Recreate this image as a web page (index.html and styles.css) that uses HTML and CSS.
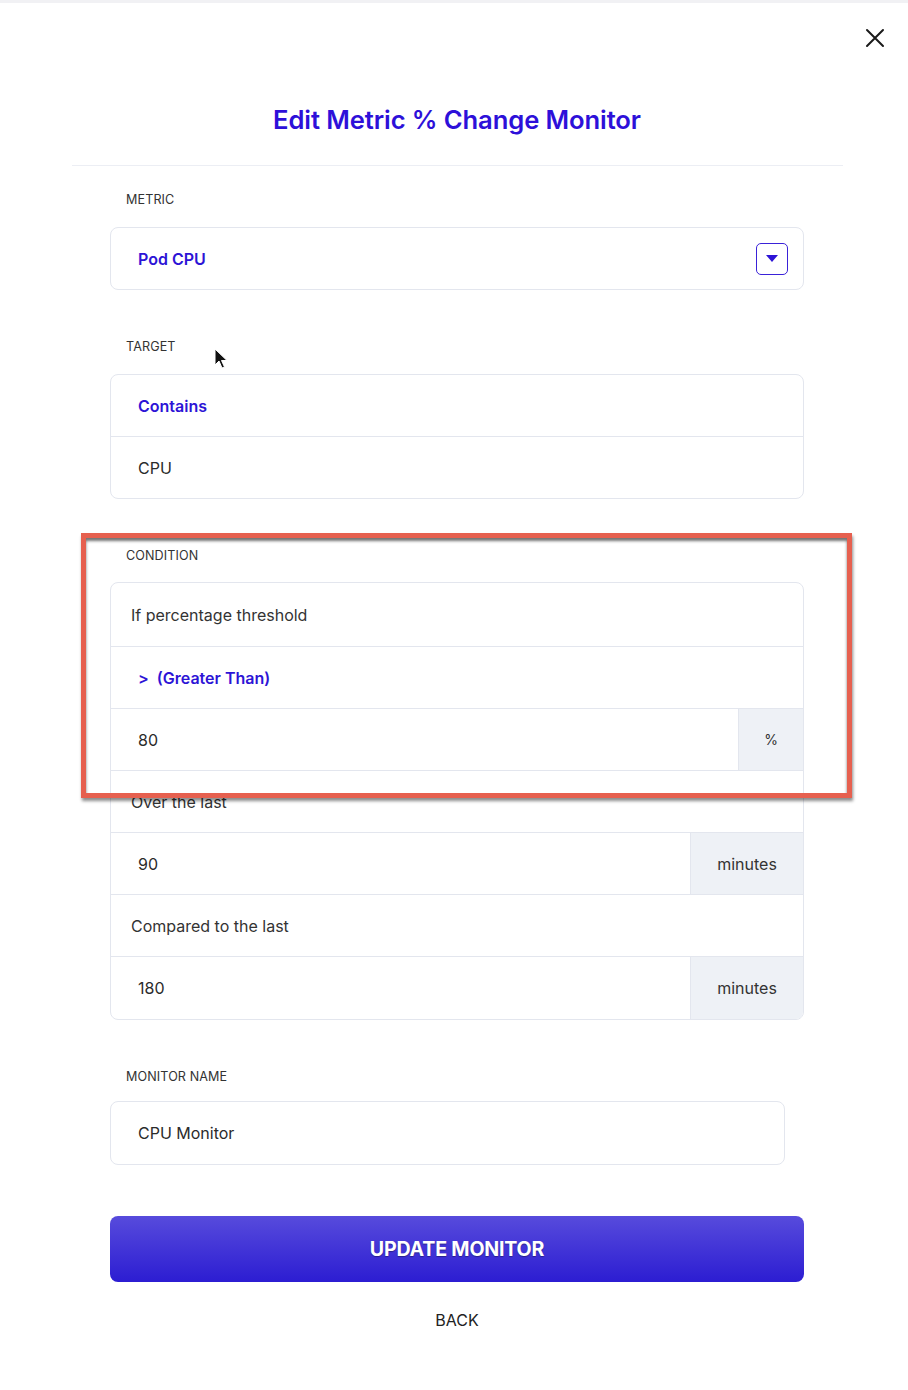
FILE: index.html
```html
<!DOCTYPE html>
<html lang="en">
<head>
<meta charset="utf-8">
<title>Edit Metric % Change Monitor</title>
<link rel="stylesheet" href="styles.css">
</head>
<body>
<div class="page">
  <div class="topbar"></div>
  <header class="header">
    <button class="close" aria-label="Close">
      <svg width="20" height="20" viewBox="0 0 20 20"><path d="M2 2 L18 18 M18 2 L2 18" stroke="#1a1a1a" stroke-width="2" stroke-linecap="round" fill="none"/></svg>
    </button>
  </header>
  <h1 class="title">Edit Metric % Change Monitor</h1>
  <div class="divider"></div>

  <form class="form">
    <section class="section">
      <div class="label">METRIC</div>
      <div class="box">
        <div class="row select-row">
          <span class="blue">Pod CPU</span>
          <span class="dd">
            <svg width="14" height="9" viewBox="0 0 14 9"><path d="M1 1 L13 1 L7 8 Z" fill="#2d14d6"/></svg>
          </span>
        </div>
      </div>
    </section>

    <section class="section">
      <div class="label">TARGET</div>
      <div class="box">
        <div class="row"><span class="blue">Contains</span></div>
        <div class="row"><span class="val">CPU</span></div>
      </div>
    </section>

    <section class="section section-cond">
      <div class="label">CONDITION</div>
      <div class="box">
        <div class="row row-first"><span class="txt">If percentage threshold</span></div>
        <div class="row"><span class="blue">&gt;&nbsp; (Greater Than)</span></div>
        <div class="row split"><span class="val">80</span><span class="addon addon-pct">%</span></div>
        <div class="row"><span class="txt">Over the last</span></div>
        <div class="row split"><span class="val">90</span><span class="addon">minutes</span></div>
        <div class="row"><span class="txt">Compared to the last</span></div>
        <div class="row split"><span class="val">180</span><span class="addon">minutes</span></div>
      </div>
    </section>

    <section class="section section-name">
      <div class="label">MONITOR NAME</div>
      <div class="box box-name">
        <div class="row"><span class="val">CPU Monitor</span></div>
      </div>
    </section>

    <button type="button" class="submit">UPDATE MONITOR</button>
    <div class="back">BACK</div>
  </form>

  <div class="highlight"></div>
  <svg class="cursor" width="14" height="22" viewBox="0 0 14 22"><path d="M1 1 L1 17 L5 13 L8 20 L10.5 19 L7.5 12.5 L13 12.5 Z" fill="#111" stroke="#fff" stroke-width="1"/></svg>
</div>
</body>
</html>
```

FILE: styles.css
```css
* { box-sizing: border-box; }
html, body { margin: 0; padding: 0; background: #fff; }
body {
  font-family: Inter, "Noto Sans", sans-serif;
  color: #2b2b2b;
  -webkit-font-smoothing: antialiased;
}
.page {
  position: relative;
  width: 908px;
  min-height: 1390px;
  background: #fff;
}
.topbar {
  height: 3px;
  background: #f1f1f4;
}
.header {
  display: flex;
  justify-content: flex-end;
  padding: 25px 23px 0 0;
  height: 50px;
}
.close {
  border: 0;
  background: none;
  padding: 0;
  width: 20px;
  height: 20px;
  cursor: pointer;
}
.title {
  margin: 51px 0 0;
  padding-left: 6px;
  text-align: center;
  font-size: 25.6px;
  line-height: 32px;
  font-weight: 600;
  color: #2d10d9;
  letter-spacing: -0.1px;
}
.divider {
  margin: 29px 65px 0 72px;
  height: 1px;
  background: #eceef4;
}
.form {
  margin: 0 104px 0 110px;
  padding-top: 26px;
}
.section { margin-bottom: 49px; }
.section-name { margin-bottom: 51px; }
.label {
  padding-left: 16px;
  font-size: 12.6px;
  line-height: 16px;
  color: #333;
  margin-bottom: 19px;
  letter-spacing: 0.1px;
}
.section-cond .label { margin-bottom: 18px; }
.section-name .label { margin-bottom: 16px; }
.box {
  border: 1px solid #e3e6ee;
  border-radius: 8px;
  overflow: hidden;
}
.box-name { width: 675px; }
.row {
  height: 62px;
  display: flex;
  align-items: center;
  padding-left: 27px;
  font-size: 16px;
  border-top: 1px solid #e3e6ee;
}
.row:first-child { border-top: 0; height: 61px; }
.box .row-first { height: 63px; }
.section-cond .row:last-child { height: 63px; }
.section-name .row { height: 62px; }
.select-row {
  justify-content: space-between;
  padding-right: 15px;
}
.blue {
  color: #2d14d6;
  font-weight: 600;
  font-size: 16px;
}
.val { color: #2b2b2b; }
.txt { color: #333; margin-left: -7px; }
.dd {
  width: 32px;
  height: 32px;
  border: 1.5px solid #3a22d8;
  border-radius: 5px;
  display: flex;
  align-items: center;
  justify-content: center;
}
.split {
  justify-content: space-between;
  padding-right: 0;
  align-items: stretch;
}
.split .val { display: flex; align-items: center; }
.addon {
  width: 113px;
  background: #eef1f6;
  border-left: 1px solid #e3e6ee;
  display: flex;
  align-items: center;
  justify-content: center;
  color: #333;
  font-size: 16px;
}
.addon-pct { width: 65px; font-size: 14px; }
.submit {
  display: block;
  width: 694px;
  height: 66px;
  margin: 0;
  border: 0;
  border-radius: 8px;
  background: linear-gradient(180deg, #574bdc 0%, #2c1dd2 100%);
  color: #fff;
  font-family: Inter, "Noto Sans", sans-serif;
  font-size: 19.6px;
  font-weight: 700;
  letter-spacing: -0.2px;
  text-shadow: 0 1px 1px rgba(0, 0, 0, 0.35);
  cursor: pointer;
}
.back {
  margin-top: 27px;
  text-align: center;
  font-size: 16px;
  line-height: 22px;
  color: #222;
}
.highlight {
  position: absolute;
  left: 81px;
  top: 533px;
  width: 771px;
  height: 265px;
  border: 5px solid #e6604f;
  box-shadow: 1px 3px 3px rgba(0, 0, 0, 0.45), inset 0 3px 3px rgba(0, 0, 0, 0.55);
  pointer-events: none;
}
.cursor {
  position: absolute;
  left: 214px;
  top: 348px;
}
```
